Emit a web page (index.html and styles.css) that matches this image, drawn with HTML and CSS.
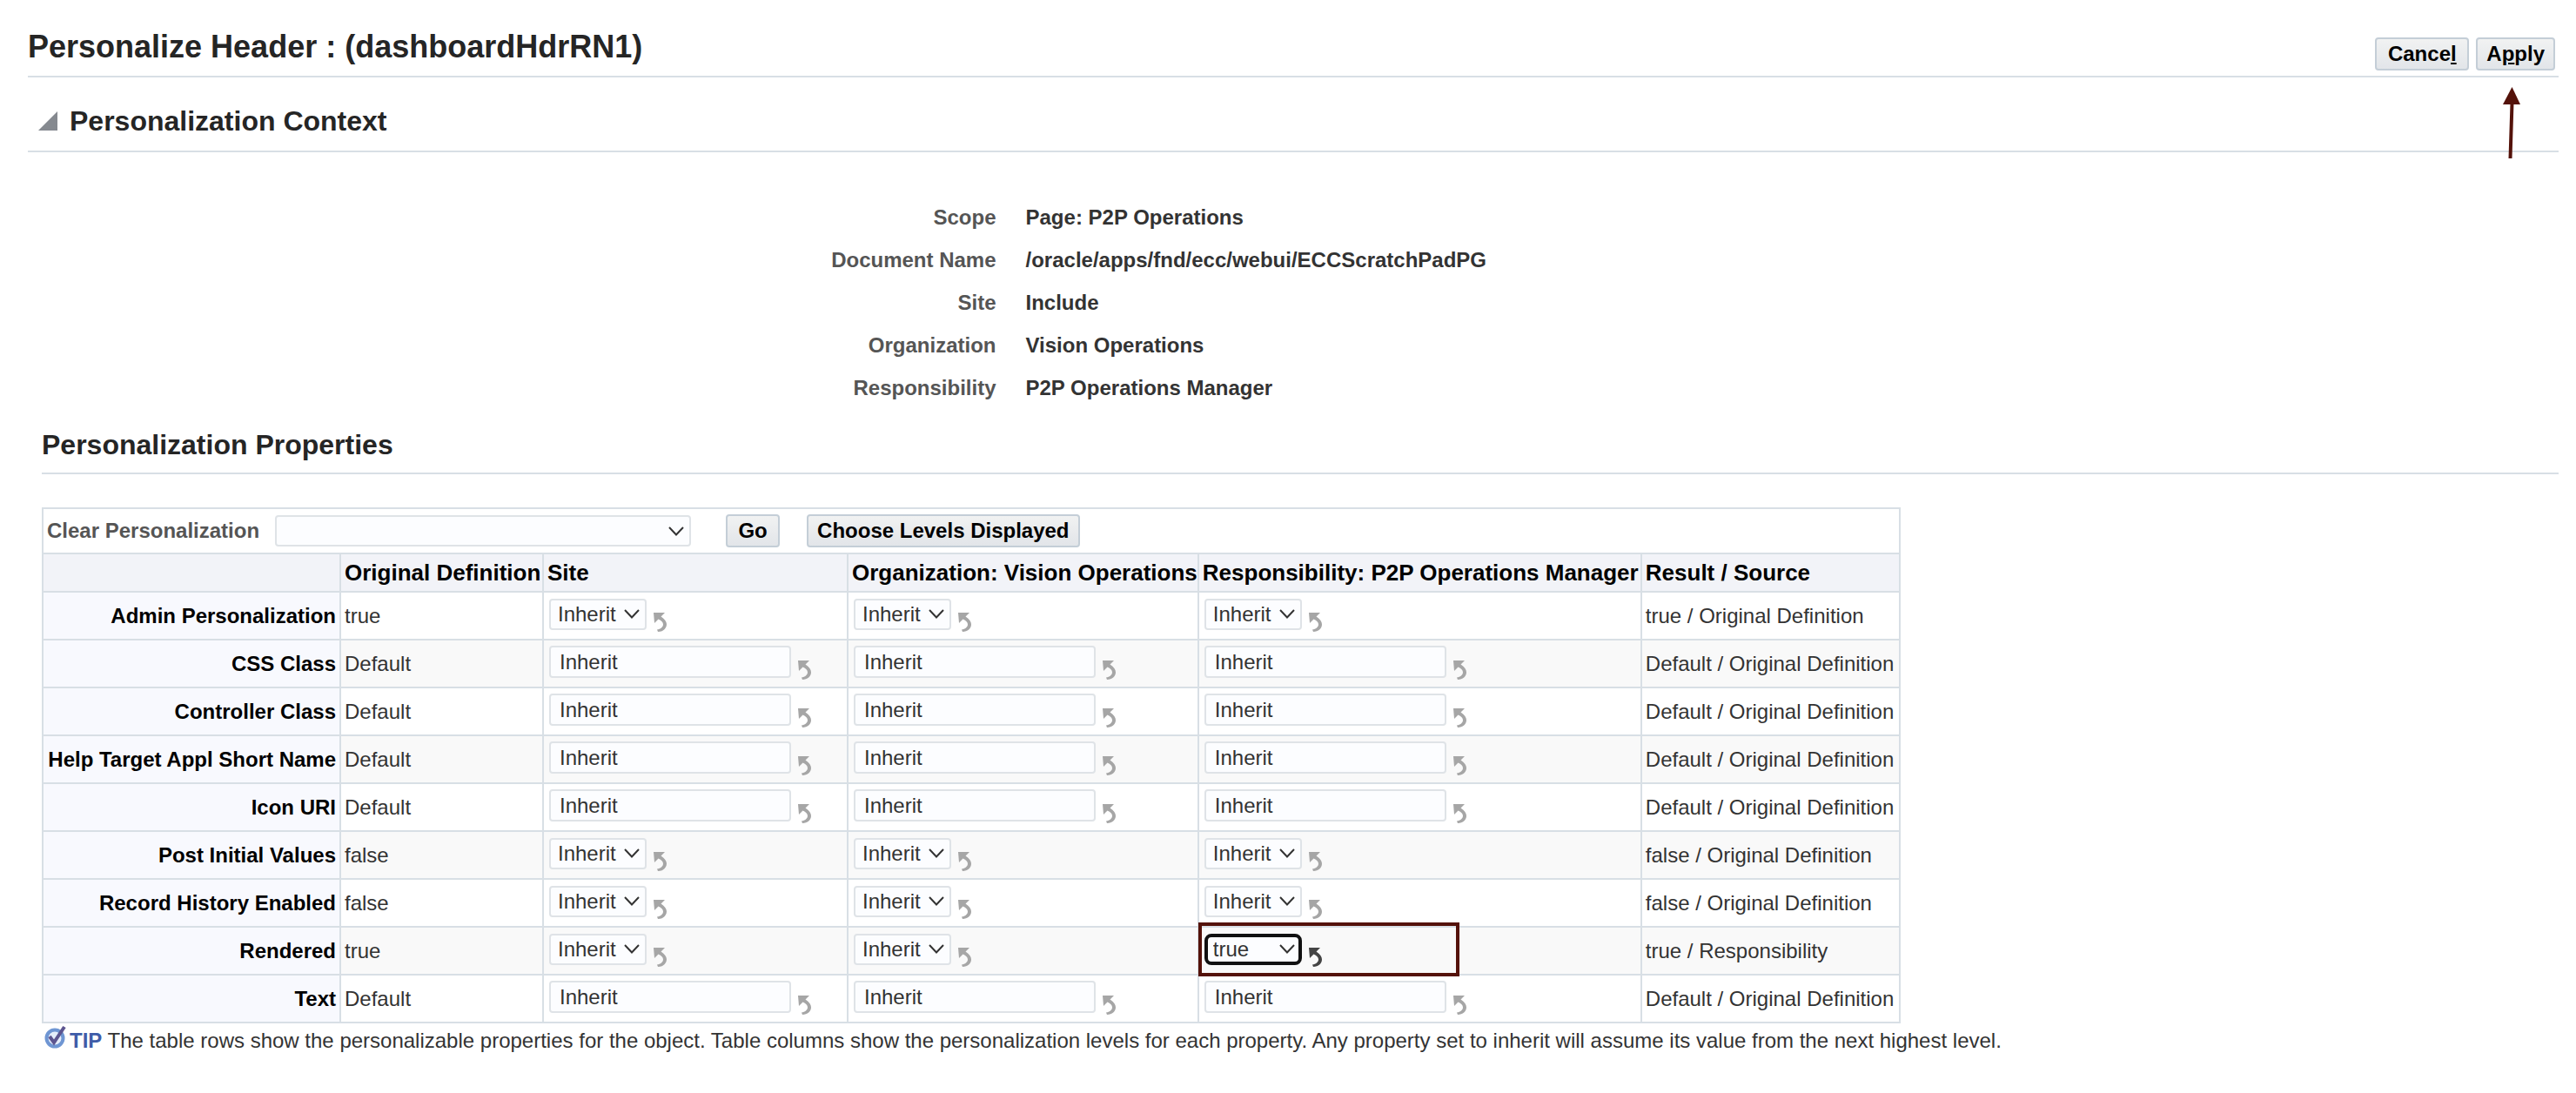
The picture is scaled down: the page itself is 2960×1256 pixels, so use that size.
FILE: index.html
```
<!DOCTYPE html>
<html lang="en"><head><meta charset="utf-8"><title>Personalize Header</title><link rel="stylesheet" href="styles.css"></head>
<body>
<svg class="defs" aria-hidden="true">
  <symbol id="reset" viewBox="0 0 16 24"><path d="M0 1H13L8.500 5.500C13 8.500 15 11.500 15 14.500C15 19 11 23 5 23L4 20.500C8 20 11 17.500 11 14.500C11 12 9 10 5.500 8.500L1 13Z" fill="currentColor"/></symbol>
</svg>
<main class="page">
  <header class="title-bar">
    <h1>Personalize Header : (dashboardHdrRN1)</h1>
    <div class="actions">
      <button class="btn cancel" type="button">Cance<u>l</u></button>
      <span class="apply"><button class="btn" type="button">A<u>p</u>ply</button>
        <svg class="pointer" viewBox="0 0 20 82"><path d="M8.500 82L10.500 18" stroke="#54120a" stroke-width="4" fill="none"/><path d="M10.500 0L20 20H0Z" fill="#54120a"/></svg></span>
    </div>
  </header>
  <section>
    <h2 class="context-title"><button class="disclose" type="button" aria-label="Collapse Personalization Context"><svg viewBox="0 0 22 22"><path d="M22 0V22H0Z" fill="#85898f"/></svg></button>Personalization Context</h2>
    <dl class="context">
      <dt>Scope</dt><dd>Page: P2P Operations</dd>
      <dt>Document Name</dt><dd>/oracle/apps/fnd/ecc/webui/ECCScratchPadPG</dd>
      <dt>Site</dt><dd>Include</dd>
      <dt>Organization</dt><dd>Vision Operations</dd>
      <dt>Responsibility</dt><dd>P2P Operations Manager</dd>
    </dl>
  </section>
  <section class="properties">
    <h2>Personalization Properties</h2>
    <div class="frame">
      <form class="toolbar">
        <label for="clear">Clear Personalization</label>
        <select id="clear" class="clear"><option></option></select>
        <button class="btn go" type="button">Go</button>
        <button class="btn" type="button">Choose Levels Displayed</button>
      </form>
      <table>
        <colgroup><col class="c-name"><col class="c-orig"><col class="c-site"><col class="c-org"><col class="c-resp"><col class="c-result"></colgroup>
        <thead><tr><td></td><th scope="col">Original Definition</th><th scope="col">Site</th><th scope="col">Organization: Vision Operations</th><th scope="col">Responsibility: P2P Operations Manager</th><th scope="col">Result / Source</th></tr></thead>
        <tbody id="rows"></tbody>
      </table>
    </div>
    <p class="tip"><svg viewBox="0 0 26 28"><circle cx="12" cy="15" r="9.500" fill="#e4edfa" stroke="#6f96d3" stroke-width="4"/><path d="M6 13L11 20L23 2" fill="none" stroke="#5c5590" stroke-width="4"/></svg><strong>TIP</strong> The table rows show the personalizable properties for the object. Table columns show the personalization levels for each property. Any property set to inherit will assume its value from the next highest level.</p>
  </section>
</main>
<script src="rows.js"></script>
</body></html>
```
FILE: rows.js
```
const rows = [
  ['Admin Personalization', 'true', 'select', 'true / Original Definition'],
  ['CSS Class', 'Default', 'text', 'Default / Original Definition'],
  ['Controller Class', 'Default', 'text', 'Default / Original Definition'],
  ['Help Target Appl Short Name', 'Default', 'text', 'Default / Original Definition'],
  ['Icon URI', 'Default', 'text', 'Default / Original Definition'],
  ['Post Initial Values', 'false', 'select', 'false / Original Definition'],
  ['Record History Enabled', 'false', 'select', 'false / Original Definition'],
  ['Rendered', 'true', 'select', 'true / Responsibility'],
  ['Text', 'Default', 'text', 'Default / Original Definition']
];
const levels = ['Site', 'Organization', 'Responsibility'];

function field(name, kind, level) {
  const changed = name === 'Rendered' && level === 'Responsibility';
  const label = `${name}, ${level}`;
  const control = kind === 'text'
    ? `<input type="text" value="Inherit" aria-label="${label}">`
    : `<select class="level${changed ? ' current' : ''}" aria-label="${label}"><option>Inherit</option><option${changed ? ' selected' : ''}>true</option><option>false</option></select>`;
  return `<td><div class="field${changed ? ' changed' : ''}">${control}<button class="reset" type="button" aria-label="Reset ${label}"><svg><use href="#reset"/></svg></button></div></td>`;
}

document.getElementById('rows').innerHTML = rows.map(([name, original, kind, result]) =>
  `<tr><th scope="row">${name}</th><td>${original}</td>${levels.map(l => field(name, kind, l)).join('')}<td>${result}</td></tr>`
).join('');
```
FILE: styles.css
```
*, *::after { box-sizing: border-box; }
body { margin: 0; background: #fff; color: #333; font: 24px/28px "Helvetica Neue", "Liberation Sans", Arial, sans-serif; }
h1, h2, p, dl, dd { margin: 0; }
.defs { display: none; }
.page { padding: 32px 20px 32px 32px; }
h1, h2 { color: #252525; font-weight: bold; border-bottom: 2px solid #d8dfe5; }
h1 { font-size: 36px; line-height: 44px; border: 0; }
h2 { font-size: 32px; line-height: 40px; padding-bottom: 12px; }

.title-bar { display: flex; justify-content: space-between; align-items: flex-start; height: 57px; border-bottom: 2px solid #d8dfe5; }
.actions { display: flex; gap: 8px; padding: 11px 4px 0 0; }
.btn { height: 38px; padding: 0 10px; border: 2px solid #c4ced7; border-radius: 4px; background: linear-gradient(#f1f2f2, #e2e5e9); color: #000; font: bold 24px/28px "Helvetica Neue", "Liberation Sans", Arial, sans-serif; white-space: nowrap; }
.cancel { width: 108px; }
.apply { position: relative; }
.pointer { position: absolute; z-index: 1; top: 57px; left: 31px; width: 20px; height: 82px; }

.context-title { display: flex; align-items: center; gap: 14px; padding: 30px 0 14px 12px; }
.disclose { width: 22px; height: 22px; padding: 0; border: 0; background: none; }
.disclose svg { display: block; width: 22px; height: 22px; }
.context { display: grid; grid-template-columns: 12fr 19fr; gap: 21px 34px; padding: 61px 0 31px; font-weight: bold; }
.context dt { color: #555; text-align: right; }

.properties { padding-left: 16px; }
.frame { display: table; margin-top: 38px; border: 2px solid #d8dfe5; border-width: 2px 2px 0; }
.toolbar { display: flex; align-items: center; height: 50px; padding-left: 4px; font-weight: bold; color: #555; }
select, input { font: 24px/28px "Helvetica Neue", "Liberation Sans", Arial, sans-serif; color: #333; border: 2px solid #dfe3e7; border-radius: 4px; background: #fcfdff; }
select { appearance: none; height: 36px; padding: 0 8px; background: #fcfdff url("data:image/svg+xml,%3Csvg xmlns='http://www.w3.org/2000/svg' viewBox='0 0 18 11'%3E%3Cpath d='M1 1L9 9.500L17 1' fill='none' stroke='%23333' stroke-width='2'/%3E%3C/svg%3E") no-repeat right 6px center / 18px 11px; }
.clear { width: 478px; margin: 0 40px 0 18px; }
.go { width: 62px; margin-right: 31px; }
table { border-collapse: collapse; width: 100%; }
th, td { height: 55px; padding: 0 2px 0 4px; text-align: left; border: 2px solid #d8dfe5; white-space: nowrap; }
tr > :first-child { border-left: 0; }
tr > :last-child { border-right: 0; }
thead th, thead td { height: 44px; padding-right: 0; background: #f2f3f8; color: #000; font-size: 26px; }
tbody th { padding: 0 4px 0 2px; text-align: right; background: #f8f9fe; color: #000; }
tbody tr:nth-child(even) td { background: #f9f9f9; }
.c-name { width: 341px; }
.c-orig { width: 233px; }
.c-site { width: 350px; }
.c-org { width: 402px; }
.c-resp { width: 509px; }
.c-result { width: 296px; }
.field { position: relative; display: flex; align-items: center; gap: 8px; height: 53px; padding: 0 2px 4px; }
.level { width: 112px; }
.current { border: 4px solid #111; border-radius: 8px; padding-left: 6px; background-position: right 4px center; }
input { width: 278px; height: 37px; padding: 0 10px; }
.reset { padding: 0; border: 0; background: none; color: #a6a6a6; align-self: flex-end; }
.reset svg { display: block; width: 16px; height: 24px; margin-bottom: 3px; }
.changed .reset { color: #444; }
.changed::after { content: ""; position: absolute; inset: -6px auto -3px -5px; width: 300px; border: 4px solid #54120a; pointer-events: none; }
.tip { padding: 2px 0 0 3px; }
.tip svg { width: 26px; height: 28px; margin-right: 3px; vertical-align: -2px; }
.tip strong { color: #3e5ca8; }
```
